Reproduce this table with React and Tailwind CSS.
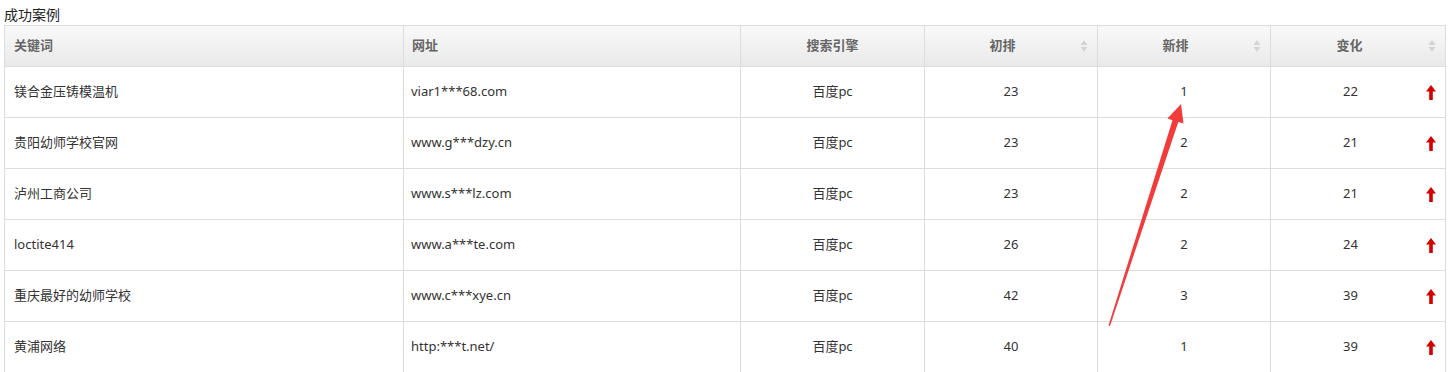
import React from "react";

const rows = [
  ["镁合金压铸模温机", "viar1***68.com", "百度pc", "23", "1", "22"],
  ["贵阳幼师学校官网", "www.g***dzy.cn", "百度pc", "23", "2", "21"],
  ["泸州工商公司", "www.s***lz.com", "百度pc", "23", "2", "21"],
  ["loctite414", "www.a***te.com", "百度pc", "26", "2", "24"],
  ["重庆最好的幼师学校", "www.c***xye.cn", "百度pc", "42", "3", "39"],
  ["黄浦网络", "http:***t.net/", "百度pc", "40", "1", "39"],
];

function SortIcon() {
  return (
    <svg width="8" height="14" viewBox="0 0 8 14" className="shrink-0">
      <path d="M4 1 L7.5 6 L0.5 6 Z" fill="#d4d4d4" />
      <path d="M4 13 L7.5 8 L0.5 8 Z" fill="#d4d4d4" />
    </svg>
  );
}

function UpArrow() {
  return (
    <svg width="10" height="15" viewBox="0 0 10 15">
      <path d="M5 0 L10 6.5 L6.8 6.5 L6.8 15 L3.2 15 L3.2 6.5 L0 6.5 Z" fill="#d40000" />
    </svg>
  );
}

export default function App() {
  const font = { fontFamily: '"Noto Sans", "Noto Sans CJK SC", sans-serif' };
  return (
    <div className="relative w-[1449px] h-[372px] overflow-hidden bg-white text-[#333]" style={font}>
      <div className="h-[25px] pl-[4px] pt-[6px] text-[14px] leading-[18px] text-[#222]">成功案例</div>
      <table className="ml-[4px] w-[1441px] table-fixed border-collapse text-[13px]">
        <colgroup>
          <col className="w-[399px]" />
          <col className="w-[337px]" />
          <col className="w-[184px]" />
          <col className="w-[173px]" />
          <col className="w-[173px]" />
          <col className="w-[175px]" />
        </colgroup>
        <thead>
          <tr className="h-[41px] bg-gradient-to-b from-[#f9f9f9] to-[#e9e9e9] text-[#666] font-bold">
            <th className="border border-[#dddddd] px-[9px] text-left font-bold">关键词</th>
            <th className="border border-[#dddddd] px-[8px] text-left font-bold">网址</th>
            <th className="border border-[#dddddd] text-center font-bold">搜索引擎</th>
            {["初排", "新排", "变化"].map((t) => (
              <th key={t} className="border border-[#dddddd] p-0 font-bold">
                <div className="flex items-center pl-[10px] pr-[9px]">
                  <span className="flex-1 text-center pr-[10px]">{t}</span>
                  <SortIcon />
                </div>
              </th>
            ))}
          </tr>
        </thead>
        <tbody>
          {rows.map((r, i) => (
            <tr key={i} className="h-[51px]">
              <td className="border border-[#dddddd] px-[9px]">{r[0]}</td>
              <td className="border border-[#dddddd] px-[7px]">{r[1]}</td>
              <td className="border border-[#dddddd] text-center">{r[2]}</td>
              <td className="border border-[#dddddd] text-center">{r[3]}</td>
              <td className="border border-[#dddddd] text-center">{r[4]}</td>
              <td className="border border-[#dddddd] p-0">
                <div className="flex items-center pr-[9px]">
                  <span className="flex-1 text-center pl-[4px]">{r[5]}</span>
                  <UpArrow />
                </div>
              </td>
            </tr>
          ))}
        </tbody>
      </table>
      <svg className="absolute left-0 top-0 pointer-events-none" width="1449" height="372">
        <polygon
          points="1181,104 1183.5,123.5 1178.3,122 1110,326 1108.5,325.5 1172.5,120.2 1167.5,118.6"
          fill="#f23b3b"
        />
      </svg>
    </div>
  );
}
